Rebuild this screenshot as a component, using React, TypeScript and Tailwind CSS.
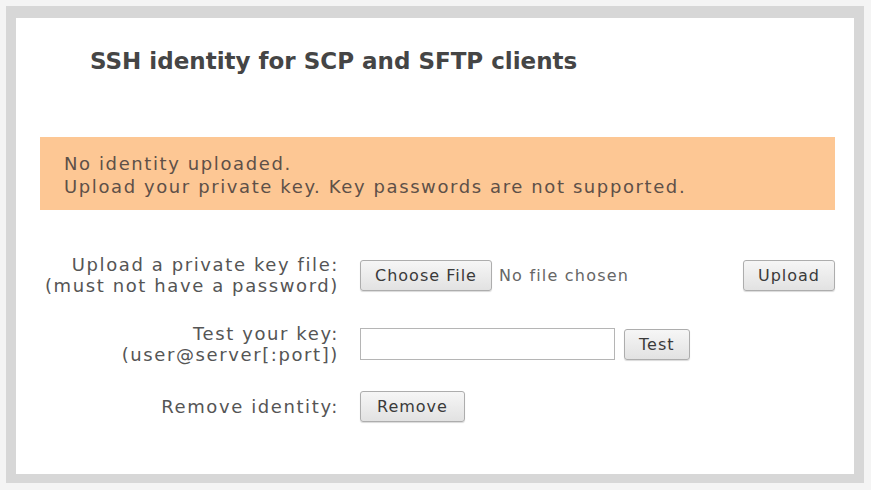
export default function App() {
  const btn =
    'h-[31px] rounded-[3px] border border-[#adadad] bg-gradient-to-b from-[#f6f6f6] to-[#e2e2e2] px-[14px] text-[16px] tracking-[1px] text-[#3a3a3a] shadow-[0_1px_1px_rgba(0,0,0,0.15)]';

  return (
    <div className="w-[871px] h-[490px] bg-[#f4f4f4] pt-[6px] pl-[6px] font-['DejaVu_Sans',Verdana,sans-serif]">
      <div className="w-[858px] h-[477px] border-t-[12px] border-l-[10px] border-r-[10px] border-b-[9px] border-[#d7d7d7] bg-white">
        <h1 className="pl-[74px] pt-[29px] text-[23px] font-bold leading-[28px] text-[#454545]">
          SSH identity for SCP and SFTP clients
        </h1>

        <div className="ml-[24px] mt-[62px] w-[795px] h-[73px] bg-[#fdc794] pl-[24px] pt-[15px] text-[18px] leading-[23px] tracking-[1.6px] text-[#5e5048]">
          <p>No identity uploaded.</p>
          <p>Upload your private key. Key passwords are not supported.</p>
        </div>

        <div className="mt-[44px] flex flex-col text-[18px] leading-[21px] tracking-[1.6px] text-[#555]">
          <div className="flex items-center h-[42px]">
            <div className="w-[323px] text-right">
              <p>Upload a private key file:</p>
              <p>(must not have a password)</p>
            </div>
            <div className="ml-[21px] flex items-center w-[475px]">
              <button className={btn}>Choose File</button>
              <span className="ml-[7px] text-[16px] tracking-[1.2px] text-[#666]">No file chosen</span>
              <button className={`${btn} ml-auto`}>Upload</button>
            </div>
          </div>

          <div className="mt-[27px] flex items-center h-[42px]">
            <div className="w-[323px] text-right">
              <p>Test your key:</p>
              <p>(user@server[:port])</p>
            </div>
            <div className="ml-[21px] flex items-center gap-[9px]">
              <input className="h-[32px] w-[255px] border border-[#b5b5b5] bg-white" />
              <button className={btn}>Test</button>
            </div>
          </div>

          <div className="mt-[25px] flex items-center h-[32px]">
            <div className="w-[323px] text-right">
              <p>Remove identity:</p>
            </div>
            <div className="ml-[21px]">
              <button className={`${btn} px-[16px]`}>Remove</button>
            </div>
          </div>
        </div>
      </div>
    </div>
  );
}
